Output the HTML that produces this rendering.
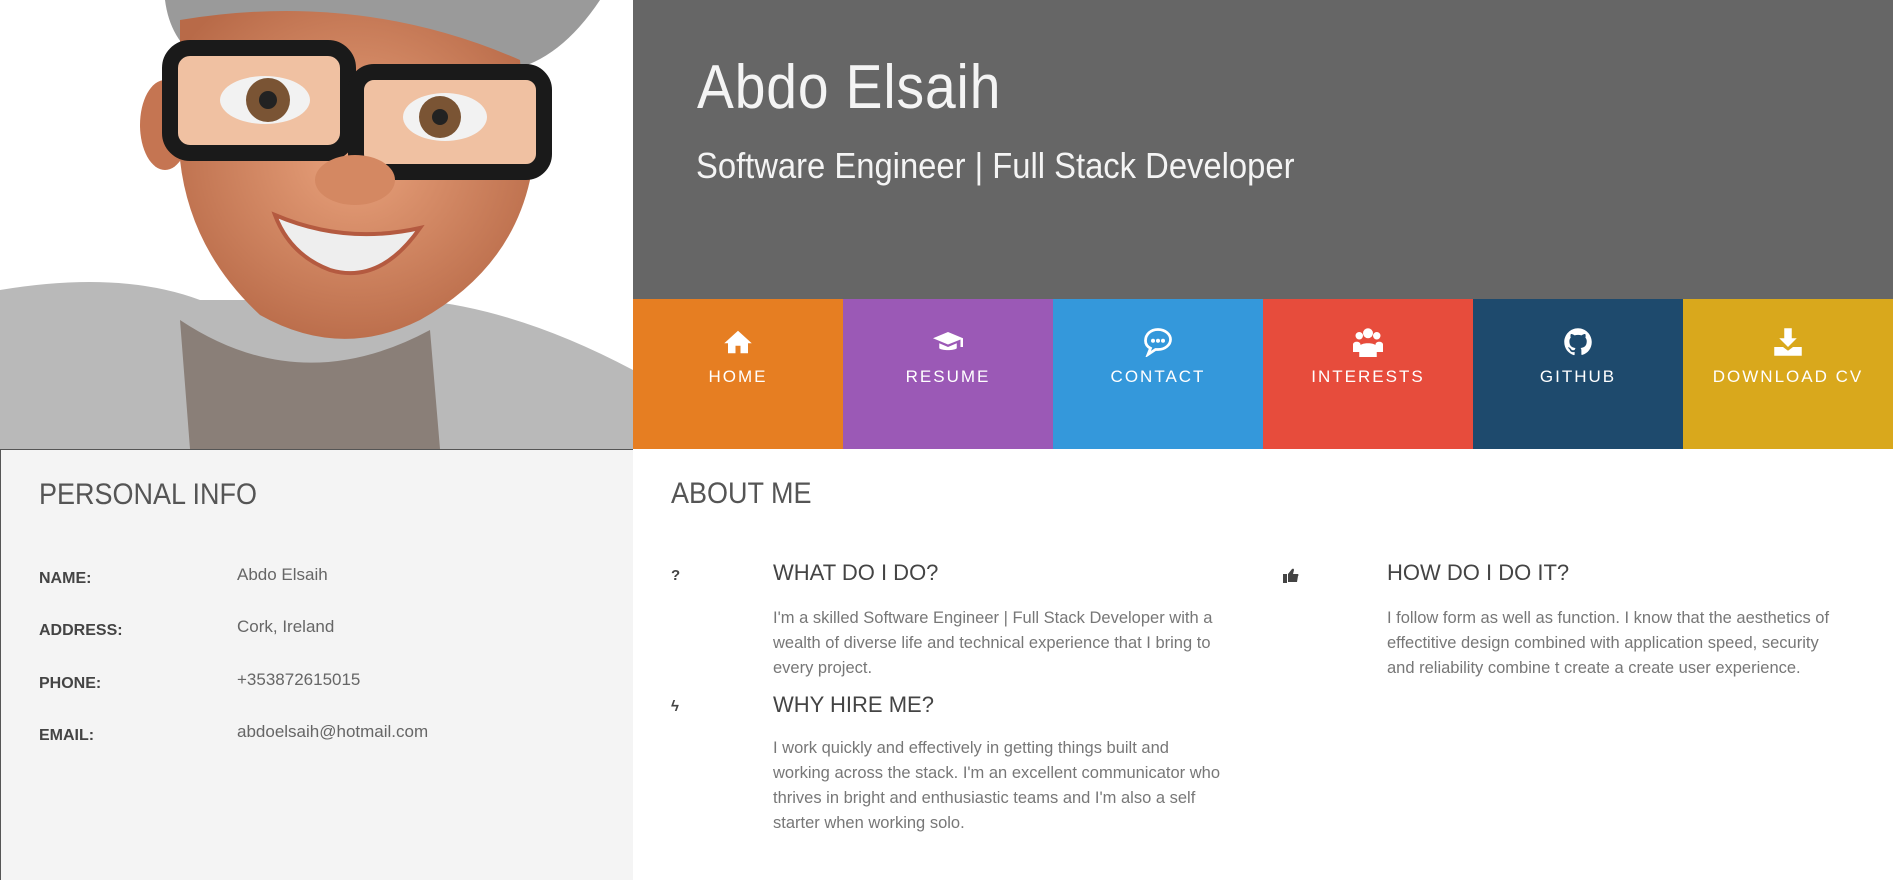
<!DOCTYPE html>
<html><head><meta charset="utf-8"><style>
*{margin:0;padding:0;box-sizing:border-box}
body{width:1893px;height:880px;overflow:hidden;font-family:"Liberation Sans",sans-serif;background:#fff;position:relative}
.photo{position:absolute;left:0;top:0;width:633px;height:449px;background:#fff;overflow:hidden}
.head{position:absolute;left:633px;top:0;width:1260px;height:299px;background:#666}
.head h1{position:absolute;left:64px;top:52px;font-weight:normal;font-size:62px;color:#f4f4f4;letter-spacing:1px;transform:scaleX(.89);transform-origin:left}
.head h2{position:absolute;left:63px;top:145px;font-weight:normal;font-size:36px;color:#f4f4f4;transform:scaleX(.91);transform-origin:left}
.nav{position:absolute;left:633px;top:299px;width:1260px;height:150px;display:flex}
.nav div{width:210px;height:150px;position:relative;color:#fff;text-align:center}
.nav svg{position:absolute;left:90px;top:28px;width:30px;height:30px;fill:#fff}
.nav span{position:absolute;left:0;right:0;top:68px;font-size:17px;letter-spacing:2px}
.left{position:absolute;left:0;top:449px;width:633px;height:431px;background:#f4f4f4;border-left:1px solid #555;border-top:1px solid #555}
.left h3{position:absolute;left:38px;top:28px;font-weight:normal;font-size:30px;color:#555;transform:scaleX(.9);transform-origin:left}
.row{position:absolute;left:38px;font-size:16px;font-weight:bold;color:#444}
.row b{position:absolute;left:198px;top:-5px;font-weight:normal;font-size:17px;color:#666;white-space:nowrap}
.right h3{position:absolute;left:671px;top:477px;font-weight:normal;font-size:30px;color:#555;transform:scaleX(.9);transform-origin:left}
.ic{position:absolute;font-size:15px;font-weight:bold;color:#444}
.h{position:absolute;font-size:22px;color:#444}
.p{position:absolute;font-size:16.5px;color:#777;line-height:25px;white-space:nowrap}
</style></head><body>
<div class="photo"><svg width="633" height="449" viewBox="0 0 633 449">
<defs><radialGradient id="sk" cx=".5" cy=".45" r=".6"><stop offset="0" stop-color="#e9a27c"/><stop offset="1" stop-color="#b86a48"/></radialGradient></defs>
<path d="M0 290 Q120 270 200 300 L420 300 Q520 310 633 370 L633 449 L0 449Z" fill="#b9b9b9"/>
<path d="M180 320 Q300 400 430 330 L440 449 L190 449Z" fill="#8a7f78"/>
<path d="M165 0 L600 0 Q560 60 510 70 L200 60 Q170 40 165 0Z" fill="#9a9a9a"/>
<ellipse cx="165" cy="125" rx="25" ry="45" fill="#c57552"/>
<path d="M180 20 Q360 -10 520 60 L530 180 Q510 270 420 320 Q340 360 260 315 Q190 250 180 160Z" fill="url(#sk)"/>
<rect x="170" y="48" width="178" height="105" rx="20" fill="#f0c1a2" stroke="#1a1a1a" stroke-width="16"/>
<rect x="356" y="72" width="188" height="100" rx="18" fill="#f0c1a2" stroke="#1a1a1a" stroke-width="16"/>
<ellipse cx="265" cy="100" rx="45" ry="24" fill="#f2f2f2"/><circle cx="268" cy="100" r="22" fill="#7a5434"/><circle cx="268" cy="100" r="9" fill="#222"/>
<ellipse cx="445" cy="117" rx="42" ry="24" fill="#f2f2f2"/><circle cx="440" cy="117" r="21" fill="#7a5434"/><circle cx="440" cy="117" r="8" fill="#222"/>
<path d="M275 215 Q345 245 420 228 Q380 285 330 270 Q290 255 275 215Z" fill="#eee" stroke="#b45a40" stroke-width="4"/>
<ellipse cx="355" cy="180" rx="40" ry="25" fill="#d48862"/>
</svg></div>
<div class="head"><h1>Abdo Elsaih</h1><h2>Software Engineer | Full Stack Developer</h2></div>
<div class="nav">
<div style="background:#e67e22"><svg viewBox="0 0 24 24"><path d="M12 3L1 13h3v8h6v-6h4v6h6v-8h3z"/></svg><span>HOME</span></div>
<div style="background:#9b59b6"><svg viewBox="0 0 24 24"><path d="M12 4L0 9l12 5 10-4v6h2V9zM5 13v4c2 2 12 2 14 0v-4l-7 3z"/></svg><span>RESUME</span></div>
<div style="background:#3498db"><svg viewBox="0 0 24 24"><path d="M12 2C6 2 2 6 2 11c0 3 2 5 4 6l-2 5 6-4c1 0 1 0 2 0 6 0 10-4 10-8S18 2 12 2z" fill="none" stroke="#fff" stroke-width="2.2"/><circle cx="8" cy="11" r="1.6"/><circle cx="12" cy="11" r="1.6"/><circle cx="16" cy="11" r="1.6"/></svg><span>CONTACT</span></div>
<div style="background:#e74c3c"><svg viewBox="0 0 24 24"><circle cx="12" cy="5" r="4"/><circle cx="5" cy="7" r="3"/><circle cx="19" cy="7" r="3"/><path d="M5 24v-8c0-4 14-4 14 0v8zM0 20v-6c0-3 6-3 6 0v6zM18 20v-6c0-3 6-3 6 0v6z"/></svg><span>INTERESTS</span></div>
<div style="background:#1e4a6d"><svg viewBox="0 0 24 24"><path d="M12 1C6 1 1 6 1 12c0 5 3 9 7.5 10.5.6.1.8-.2.8-.5v-2c-3 .7-3.7-1.4-3.7-1.4-.5-1.3-1.2-1.6-1.2-1.6-1-.7.1-.7.1-.7 1.1.1 1.7 1.1 1.7 1.1 1 1.7 2.6 1.2 3.2.9.1-.7.4-1.2.7-1.5-2.4-.3-5-1.2-5-5.4 0-1.2.4-2.2 1.1-2.9-.1-.3-.5-1.4.1-2.9 0 0 .9-.3 3 1.1a10 10 0 0 1 5.5 0c2.1-1.4 3-1.1 3-1.1.6 1.5.2 2.6.1 2.9.7.8 1.1 1.7 1.1 2.9 0 4.2-2.6 5.1-5 5.4.4.3.7 1 .7 2v3c0 .3.2.6.8.5C20 21 23 17 23 12 23 6 18 1 12 1z"/></svg><span>GITHUB</span></div>
<div style="background:#d9a81c"><svg viewBox="0 0 24 24"><path d="M9 1h6v8h4l-7 7-7-7h4zM1 16h7l4 3 4-3h7v7H1z"/></svg><span>DOWNLOAD CV</span></div>
</div>
<div class="left"><h3>PERSONAL INFO</h3>
<div class="row" style="top:120px">NAME:<b>Abdo Elsaih</b></div>
<div class="row" style="top:172px">ADDRESS:<b>Cork, Ireland</b></div>
<div class="row" style="top:225px">PHONE:<b>+353872615015</b></div>
<div class="row" style="top:277px">EMAIL:<b>abdoelsaih@hotmail.com</b></div>
</div>
<div class="right"><h3>ABOUT ME</h3>
<div class="ic" style="left:671px;top:567px">?</div>
<div class="h" style="left:773px;top:560px">WHAT DO I DO?</div>
<div class="p" style="left:773px;top:606px">I'm a skilled Software Engineer | Full Stack Developer with a<br>wealth of diverse life and technical experience that I bring to<br>every project.</div>
<div class="ic" style="left:671px;top:698px">ϟ</div>
<div class="h" style="left:773px;top:692px">WHY HIRE ME?</div>
<div class="p" style="left:773px;top:736px">I work quickly and effectively in getting things built and<br>working across the stack. I'm an excellent communicator who<br>thrives in bright and enthusiastic teams and I'm also a self<br>starter when working solo.</div>
<svg style="position:absolute;left:1283px;top:568px" width="16" height="15" viewBox="0 0 16 15" fill="#444"><rect x="0" y="6" width="4" height="9"/><path d="M5 6 L9 1 Q11 0 11 2 L10 6 H15 Q16 7 15 8 L14 14 H5Z"/></svg>
<div class="h" style="left:1387px;top:560px">HOW DO I DO IT?</div>
<div class="p" style="left:1387px;top:606px">I follow form as well as function. I know that the aesthetics of<br>effectitive design combined with application speed, security<br>and reliability combine t create a create user experience.</div>
</div>
</body></html>
